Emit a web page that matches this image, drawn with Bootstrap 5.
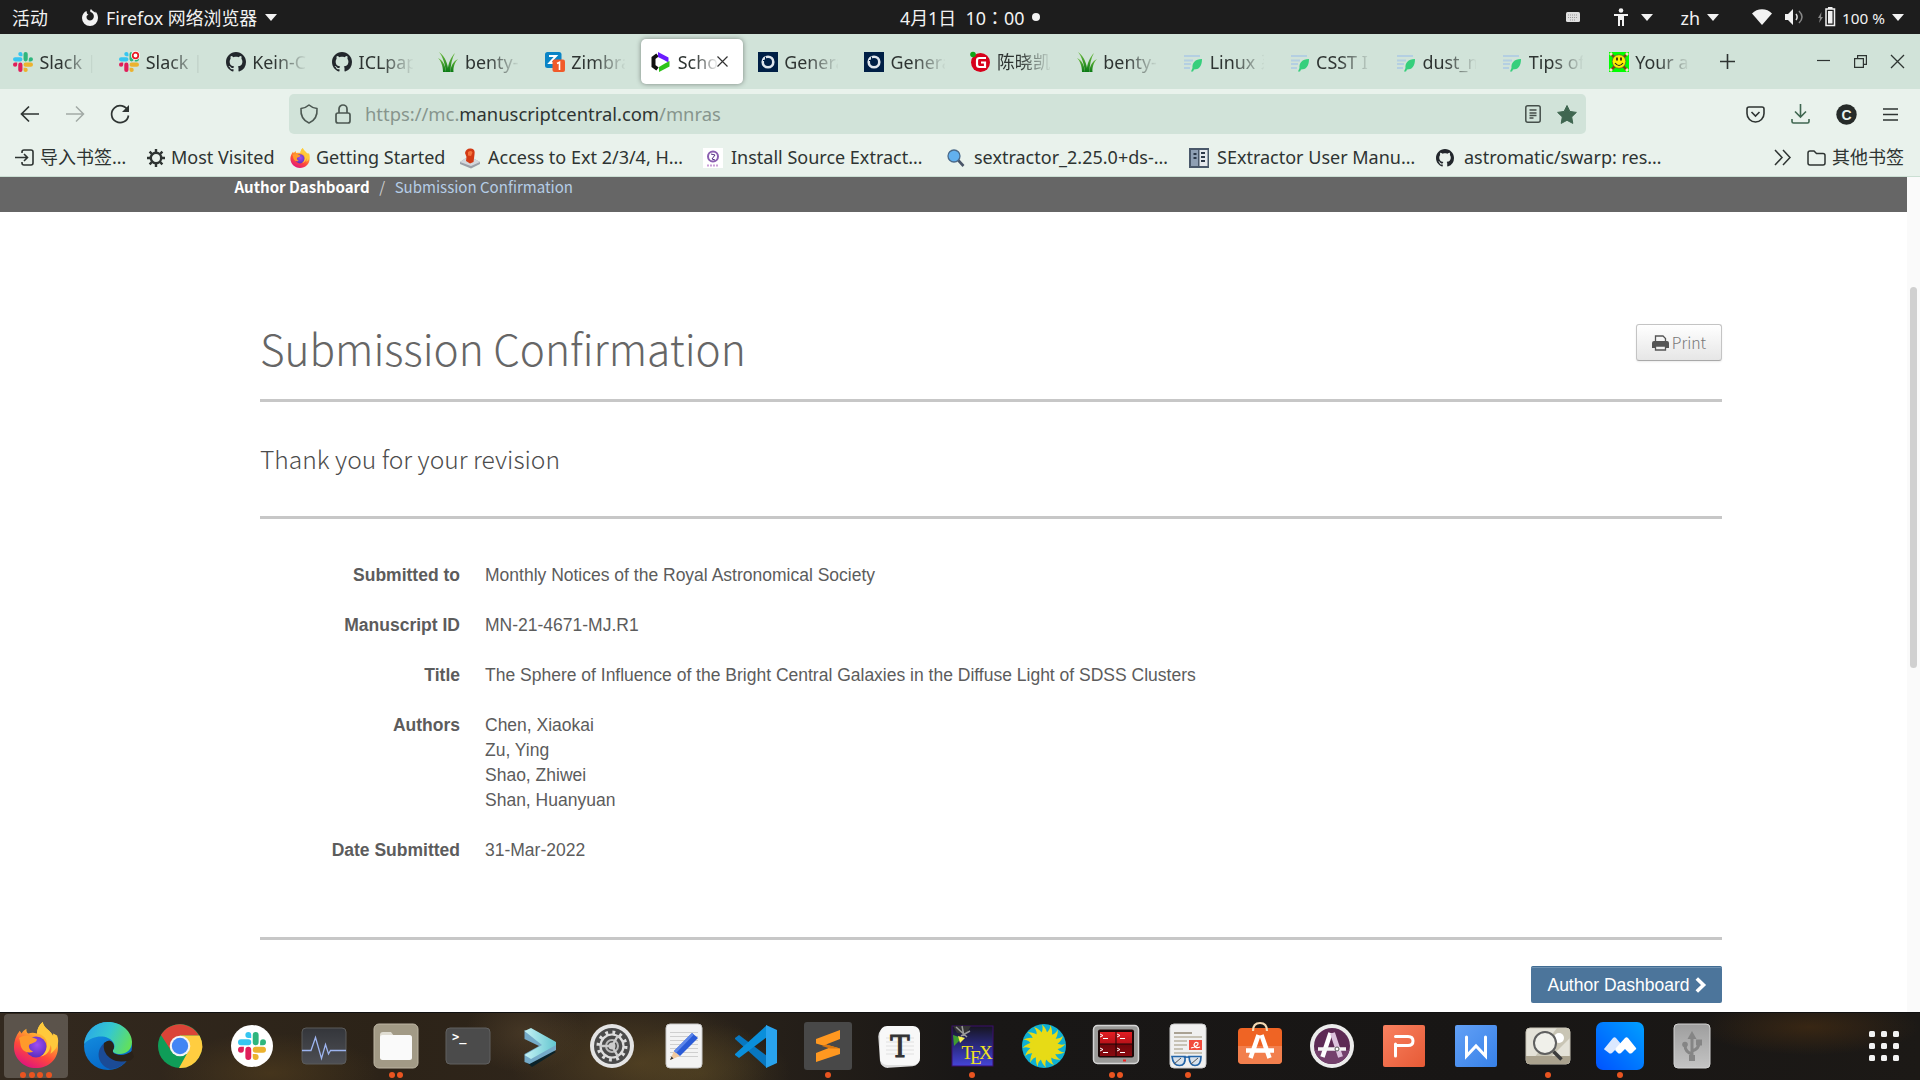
<!DOCTYPE html>
<html lang="zh-CN">
<head>
<meta charset="utf-8">
<title>Submission Confirmation</title>
<link href="https://cdn.jsdelivr.net/npm/bootstrap@5.3.0/dist/css/bootstrap.min.css" rel="stylesheet">
<style>
  body { width:1920px; height:1080px; overflow:hidden; font-family:"Noto Sans","Noto Sans CJK SC",sans-serif; font-size:17.9px; color:#2e3432; background:#fff; }
  svg { display:block; flex:none; overflow:visible; }
  .defs { width:0; height:0; }
  .nowrap { white-space:nowrap; }
  /* desktop panel */
  .panel { height:34px; background:#1d1d1d; color:#f2f2f2; line-height:34px; }
  .panel span { padding-top:1px; }
  .panel-side { width:880px; }
  .panel .tri { width:0; height:0; padding:0; border:6px solid transparent; border-top:7px solid #f2f2f2; border-bottom:0; flex:none; }
  .act { margin-left:12px; width:70px; }
  .panel .clock-dot { width:8px; height:8px; padding:0; border-radius:50%; background:#f2f2f2; }
  .clock em { font-style:normal; font-family:"Noto Sans CJK JP",sans-serif; }
  .batt { font-size:15.3px; margin-right:3px; }
  .sp-kb{margin-right:33px}.sp-acc{margin-right:12px}.sp-t1{margin-right:28px}.sp-zh{margin-right:7px}.sp-t2{margin-right:33px}.sp-wf{margin-right:13px}.sp-vol{margin-right:14px}.sp-bat{margin-right:6px}
  /* tabs */
  .tabstrip { height:55px; background:#d1e3d9; padding-left:2.4px; }
  .btab { width:106.4px; height:45px; padding:0 0 0 10.5px; gap:6.5px; flex:none; }
  .btab .ttl { width:54px; padding-top:1px; overflow:hidden; -webkit-mask-image:linear-gradient(90deg,#000 42%,transparent 102%); mask-image:linear-gradient(90deg,#000 42%,transparent 102%); }
  .btab.live { width:102px; margin:0 4.4px 0 0; background:#fff; border-radius:5px; box-shadow:0 0 5px rgba(0,0,0,.42); }
  .btab.live .ttl { width:40px; }
  .btab.live .ttl + svg { margin-left:-7px; }
  .plus { margin-left:15px; }
  .winbtns { gap:24px; padding-right:16px; }
  /* navigation */
  .navrow { height:51px; background:#e9f2ec; padding-bottom:1px; }
  .navleft { width:289px; padding-left:20px; gap:25px; }
  .address { width:1297px; height:40px; border-radius:5px; background:#d1e3d9; padding:0 9px 0 10px; font-size:18.4px; color:#87958d; }
  .address b { font-weight:400; color:#2e3432; }
  .address .url { margin-left:14px; padding-bottom:1px; }
  .navright { gap:26px; padding-right:22px; }
  /* bookmarks */
  .marks { height:37px; background:#e9f2ec; border-bottom:1px solid #cbdfd3; padding-left:15px; padding-bottom:1px; font-size:18px; }
  .bm { gap:6px; flex:none; }
  .w1{width:132px}.w2{width:143px}.w3{width:170px}.w4{width:243px}
  .bm.w4 { gap:8px; }
  /* page */
  .viewport { height:835px; }
  .page { width:1907px; background:#fff; }
  .sbar { width:13px; background:#fafafa; padding:110px 3px 0 3px; }
  .thumb { width:7px; height:381px; border-radius:4px; background:#d0d0d0; }
  .source { font-family:"Noto Sans CJK SC",sans-serif; }
  .crumbs { height:35px; background:#666; padding-left:234.5px; padding-top:1px; font-size:15.05px; line-height:18px; color:#b5cde6; }
  .crumbs b { color:#fff; }
  .crumbs i { font-style:normal; color:#ccc; width:25px; text-align:center; }
  .sheet { width:1462px; margin-left:260px; padding-top:112px; color:#5c5c5c; }
  .rule { height:3px; background:#c7c7c7; }
  .head-row { height:75px; }
  .head-row h1 { font-size:42.4px; font-weight:300; line-height:48px; margin:0; color:#666; }
  .thanks { height:114px; font-size:24.6px; font-weight:300; line-height:112px; color:#4c4c4c; }
  .btn-print { width:86px; height:37px; border:1px solid #c4c4c4; border-bottom-color:#a9a9a9; border-radius:3px; background:linear-gradient(#fff,#e6e6e6); box-shadow:0 1px 2px rgba(0,0,0,.08); font-size:15.8px; font-weight:300; color:#777; padding:0; gap:3px; line-height:33px; }
  .facts { font-family:"Liberation Sans",Arial,sans-serif; font-size:17.5px; line-height:25px; padding-top:43.5px; height:418px; }
  .facts dl { margin:0 0 25px; gap:25px; }
  .facts dt { width:200px; text-align:right; }
  .facts dd { margin:0; }
  .btn-dash { width:191px; height:37px; margin-top:26px; border-radius:2px; background:#4c759b; color:#fff; font:17.5px "Liberation Sans",Arial,sans-serif; padding:0; border:0; border-top:1px solid #406c93; gap:5px; box-shadow:inset 0 1px 0 #6f92b2; }
  /* dock */
  .dock { height:68px; border-top:1px solid #111; background:
    radial-gradient(ellipse 110px 40px at 270px 60px,rgba(88,66,30,.55),transparent),
    radial-gradient(ellipse 130px 60px at 640px 50px,rgba(96,76,38,.6),transparent),
    radial-gradient(ellipse 60px 40px at 525px 20px,rgba(96,76,50,.45),transparent),
    radial-gradient(ellipse 90px 50px at 700px 60px,rgba(90,74,36,.5),transparent),
    radial-gradient(ellipse 110px 28px at 1810px 14px,rgba(80,50,18,.55),transparent),
    linear-gradient(90deg,#33291f 0,#2c2318 380px,#30261b 600px,#221d18 830px,#191716 960px,#181615 1500px,#1c1916 1920px); }
  .dockitem { width:72px; height:67px; padding-top:9px; flex:none; }
  .dockitem .face { width:48px; height:48px; }
  .dockitem.on .tile { width:64px; height:64px; border-radius:4px; background:rgba(255,255,255,.2); margin-top:-8px; padding-top:8px; }
  .dots { gap:2.7px; height:6px; margin-top:2px; }
  .dots i { width:6px; height:6px; border-radius:50%; background:#e95420; }
  .grid9 { margin-right:21px; margin-top:18px; width:30px; height:30px; }
</style>
<script src="https://cdn.jsdelivr.net/npm/bootstrap@5.3.0/dist/js/bootstrap.bundle.min.js"></script>
</head>
<body>
<svg class="defs position-absolute">
  <defs>
    <linearGradient id="gFox" x1=".8" y1="0" x2=".3" y2="1"><stop offset="0" stop-color="#fff44f"/><stop offset=".35" stop-color="#ffa930"/><stop offset=".65" stop-color="#ff4a3a"/><stop offset="1" stop-color="#e0127f"/></linearGradient>
    <radialGradient id="gOrb" cx=".55" cy=".4" r=".6"><stop offset="0" stop-color="#a04df0"/><stop offset="1" stop-color="#5a2fbf"/></radialGradient>
    <linearGradient id="gEdgeT" x1="0" y1=".3" x2="1" y2=".6"><stop offset="0" stop-color="#2aa7e8"/><stop offset=".5" stop-color="#35c8cf"/><stop offset="1" stop-color="#63e05a"/></linearGradient>
    <linearGradient id="gEdgeB" x1="0" y1="0" x2=".4" y2="1"><stop offset="0" stop-color="#1798e6"/><stop offset="1" stop-color="#0668c8"/></linearGradient>
    <linearGradient id="gGrey" x1="0" y1="0" x2="0" y2="1"><stop offset="0" stop-color="#34363b"/><stop offset="1" stop-color="#4d4e53"/></linearGradient>
    <linearGradient id="gMeet" x1="1" y1="0" x2="0" y2="1"><stop offset="0" stop-color="#00a0ff"/><stop offset="1" stop-color="#0052ff"/></linearGradient>
    <linearGradient id="gCyan" x1="0" y1="0" x2="1" y2="0"><stop offset="0" stop-color="#c5f2f5"/><stop offset="1" stop-color="#63c6cf"/></linearGradient>
    <linearGradient id="gRed" x1="0" y1="0" x2="0" y2="1"><stop offset="0" stop-color="#e21d22"/><stop offset=".49" stop-color="#b81219"/><stop offset=".5" stop-color="#6e060a"/><stop offset="1" stop-color="#8a0a10"/></linearGradient>
    <linearGradient id="gP" x1="0" y1="0" x2="1" y2="1"><stop offset="0" stop-color="#f98160"/><stop offset="1" stop-color="#e65a36"/></linearGradient>
    <linearGradient id="gW" x1="0" y1="0" x2="1" y2="1"><stop offset="0" stop-color="#62a0f6"/><stop offset="1" stop-color="#3781e8"/></linearGradient>
    <linearGradient id="gUsb" x1="0" y1="0" x2="0" y2="1"><stop offset="0" stop-color="#9e9e9e"/><stop offset="1" stop-color="#c4c4c4"/></linearGradient>
    <linearGradient id="gTex" x1="0" y1="0" x2="0" y2="1"><stop offset="0" stop-color="#17151f"/><stop offset=".5" stop-color="#2a2a80"/><stop offset="1" stop-color="#4545d8"/></linearGradient>
    <linearGradient id="gGrass" x1="0" y1="0" x2="0" y2="1"><stop offset="0" stop-color="#6dbb3f"/><stop offset="1" stop-color="#0a7a14"/></linearGradient>
  </defs>
  <symbol id="slack" viewBox="0 0 24 24">
    <path fill="#e01e5a" d="M5.042 15.165a2.528 2.528 0 0 1-2.52 2.523A2.528 2.528 0 0 1 0 15.165a2.527 2.527 0 0 1 2.522-2.52h2.52v2.52zM6.313 15.165a2.527 2.527 0 0 1 2.521-2.52 2.527 2.527 0 0 1 2.521 2.52v6.313A2.528 2.528 0 0 1 8.834 24a2.528 2.528 0 0 1-2.521-2.522v-6.313z"/>
    <path fill="#36c5f0" d="M8.834 5.042a2.528 2.528 0 0 1-2.521-2.52A2.528 2.528 0 0 1 8.834 0a2.528 2.528 0 0 1 2.521 2.522v2.52H8.834zM8.834 6.313a2.528 2.528 0 0 1 2.521 2.521 2.528 2.528 0 0 1-2.521 2.521H2.522A2.528 2.528 0 0 1 0 8.834a2.528 2.528 0 0 1 2.522-2.521h6.312z"/>
    <path fill="#2eb67d" d="M18.956 8.834a2.528 2.528 0 0 1 2.522-2.521A2.528 2.528 0 0 1 24 8.834a2.528 2.528 0 0 1-2.522 2.521h-2.522V8.834zM17.688 8.834a2.528 2.528 0 0 1-2.523 2.521 2.527 2.527 0 0 1-2.52-2.521V2.522A2.527 2.527 0 0 1 15.165 0a2.528 2.528 0 0 1 2.523 2.522v6.312z"/>
    <path fill="#ecb22e" d="M15.165 18.956a2.528 2.528 0 0 1 2.523 2.522A2.528 2.528 0 0 1 15.165 24a2.527 2.527 0 0 1-2.52-2.522v-2.522h2.52zM15.165 17.688a2.527 2.527 0 0 1-2.52-2.523 2.526 2.526 0 0 1 2.52-2.52h6.313A2.527 2.527 0 0 1 24 15.165a2.528 2.528 0 0 1-2.522 2.523h-6.313z"/>
  </symbol>
  <symbol id="github" viewBox="0 0 16 16"><path fill="#22272c" d="M8 0C3.58 0 0 3.58 0 8c0 3.54 2.29 6.53 5.47 7.59.4.07.55-.17.55-.38 0-.19-.01-.82-.01-1.49-2.01.37-2.53-.49-2.69-.94-.09-.23-.48-.94-.82-1.13-.28-.15-.68-.52-.01-.53.63-.01 1.08.58 1.23.82.72 1.21 1.87.87 2.33.66.07-.52.28-.87.51-1.07-1.78-.2-3.64-.89-3.64-3.95 0-.87.31-1.59.82-2.15-.08-.2-.36-1.02.08-2.12 0 0 .67-.21 2.2.82.64-.18 1.32-.27 2-.27s1.36.09 2 .27c1.53-1.04 2.2-.82 2.2-.82.44 1.1.16 1.92.08 2.12.51.56.82 1.27.82 2.15 0 3.07-1.87 3.75-3.65 3.95.29.25.54.73.54 1.48 0 1.07-.01 1.93-.01 2.2 0 .21.15.46.55.38A8.01 8.01 0 0 0 16 8c0-4.42-3.58-8-8-8z"/></symbol>
  <symbol id="grass" viewBox="0 0 20 20"><g fill="url(#gGrass)"><path d="M8 20C7 12 5 5 1 0c6 4 9 12 9.500 20z"/><path d="M5 20C5 14 3 9 0 6c5 2 7.500 8 8 14z"/><path d="M9.500 20C10 11 13 5 17 1c-3 5-4.500 12-4.500 19z"/><path d="M12.500 20c0-6 3-11 7.500-13-3 3-5 8-4.500 13z"/></g></symbol>
  <symbol id="feather" viewBox="0 0 20 20"><path d="M1 4h16M1 8.500h9M1 12h7M1 16h6" stroke="#b4cfe2" stroke-width="2"/><path fill="#36cf7c" d="M19 7c-7 0-10 4-9.500 9L8 19.500h2l1-2c5 0 8-3 8-10.500z"/></symbol>
  <symbol id="ring" viewBox="0 0 20 20"><path fill="#001f46" d="M0 0h20v20H0z"/><circle cx="10" cy="10" r="5.300" fill="none" stroke="#dfe5ec" stroke-width="2.600"/><path d="M7.500 4.700v2.800M5 8.500h2" stroke="#001f46"/></symbol>
  <symbol id="firefox" viewBox="0 0 48 48">
    <path fill="url(#gFox)" d="M31 0c-4 3-6 8-6 12-3-1-6-1-9 0-2-1-2-3-2-5-2 1-4 3-5 5L7 9C3 14 1 20 1 26c0 12 10 22 23 22s23-9 23-22c0-5-2-10-5-14v3C40 9 32 7 31 0z"/>
    <circle cx="24" cy="26" r="11" fill="url(#gOrb)"/>
    <path fill="#ff9a2b" d="M6 17c4-3 9-4 14-1l5 2c0 3-4 4-7 5-3 2-1 6 3 8-5 2-10 0-12-4-2-3-1-8-3-10z"/>
    <path fill="#ffc93c" d="M31 0c-4 3-6 8-6 12 8 1 12 8 10 15-1 4-3 7-6 9 6-1 10-6 10-12 2 3 1 6 0 9 7-4 10-12 7-19l-4-2v3C40 9 32 7 31 0z"/>
  </symbol>
</svg>

<div class="vh-100 d-flex flex-column">
  <!-- desktop panel -->
  <header class="panel d-flex justify-content-between align-items-center nowrap">
    <div class="panel-side d-flex align-items-center">
      <span class="act">活动</span>
      <svg width="16" height="17" viewBox="0 0 16 17"><path fill="#f2f2f2" d="M9 0c-1 1-1 2-.5 3C12 4 13 8 10.500 10.500 8 12.500 4.500 11 4.500 8c0-1.500 1-2 2-2L5 4.500 4.500 2C2 3 0 6 0 9a8 8 0 0 0 16 0c0-3-1-5-2.500-6.500V4C12.500 2.500 10 2 9 0z"/></svg>
      <span class="ms-1 ps-1 pe-2">Firefox 网络浏览器</span><span class="tri"></span>
    </div>
    <div class="d-flex align-items-center flex-fill">
      <span class="clock ms-3 ps-1">4月1日&nbsp; 10<em lang="ja">：</em>00</span><span class="clock-dot ms-2"></span>
    </div>
    <div class="d-flex align-items-center pe-3">
      <svg width="14" height="10" viewBox="0 0 14 10" class="sp-kb"><rect width="14" height="10" rx="1.500" fill="#e0e0e0"/><path d="M2 3h10M2 5.500h10M4 8h6" stroke="#999" stroke-dasharray="1 1"/></svg>
      <svg width="16" height="18" viewBox="0 0 16 18" class="sp-acc"><circle cx="8" cy="2.500" r="2.300" fill="#f2f2f2"/><path d="M1 7h14M8 6v5M6 7v11M10 7v11" stroke="#f2f2f2" stroke-width="2"/><path fill="#f2f2f2" d="M5 6h6v6H5z"/></svg>
      <span class="tri sp-t1"></span><span class="sp-zh">zh</span><span class="tri sp-t2"></span>
      <svg width="20" height="16" viewBox="0 0 20 16" class="sp-wf"><path fill="#f2f2f2" d="M0 4.500C5-1.300 15-1.300 20 4.500L10 16z"/></svg>
      <svg width="19" height="16" viewBox="0 0 19 16" class="sp-vol"><path fill="#f2f2f2" d="M0 5h3l5-5v16l-5-5H0z"/><path d="M11 5c1.500 2 1.500 4 0 6" stroke="#ddd" stroke-width="1.500" fill="none"/><path d="M14 2c4 4 4 8 0 12" stroke="#888" stroke-width="1.500" fill="none"/></svg>
      <svg width="18" height="20" viewBox="0 0 18 20" class="sp-bat"><path fill="#888" d="M3.500 5L0 11h2l-1 5 4-6H3z"/><path d="M8 2h8.500v16.500H8z" fill="none" stroke="#f2f2f2" stroke-width="1.500"/><path fill="#f2f2f2" d="M10 0h4.500v2H10zM10 4h4.500v12.500H10z"/></svg>
      <span class="batt">100 %</span><span class="tri ms-1"></span>
    </div>
  </header>

  <!-- tab strip -->
  <div class="tabstrip d-flex align-items-center nowrap">
    <div class="btab d-flex align-items-center"><svg width="20" height="20"><use href="#slack"/></svg><span class="ttl">Slack |</span></div>
    <div class="btab d-flex align-items-center"><svg width="20" height="20"><use href="#slack"/><circle cx="16.500" cy="3.500" r="4.500" fill="#fff"/><circle cx="16.500" cy="3.500" r="2.800" fill="#fff" stroke="#e81c24" stroke-width="1.800"/></svg><span class="ttl">Slack |</span></div>
    <div class="btab d-flex align-items-center"><svg width="20" height="20"><use href="#github"/></svg><span class="ttl">Kein-C</span></div>
    <div class="btab d-flex align-items-center"><svg width="20" height="20"><use href="#github"/></svg><span class="ttl">ICLpap</span></div>
    <div class="btab d-flex align-items-center"><svg width="20" height="20"><use href="#grass"/></svg><span class="ttl">benty-</span></div>
    <div class="btab d-flex align-items-center"><svg width="20" height="20" viewBox="0 0 20 20"><rect width="16.500" height="16" rx="2.500" fill="#0a84c6"/><path d="M4 4h7L4.500 11H9" stroke="#fff" stroke-width="2" fill="none"/><rect x="7.500" y="7.500" width="12.500" height="12.500" rx="2" fill="#f15a29"/><path d="M12 11.500l2.500-1.300V18" stroke="#fff" stroke-width="1.600" fill="none"/></svg><span class="ttl">Zimbra</span></div>
    <div class="btab live d-flex align-items-center"><svg width="20" height="20" viewBox="0 0 20 20"><path d="M6.500 3L2.500 6v8l4 3" stroke="#111" stroke-width="4" fill="none"/><path fill="#6a1bff" d="M7 0l10.500 5.500v5L13 8 7 5z"/><path fill="#2fc31a" d="M18.500 9v5.500L8 20v-5l5-3z"/></svg><span class="ttl">Scho</span><svg width="11" height="11" viewBox="0 0 11 11"><path d="M.5.5l10 10M10.500.5l-10 10" stroke="#333" stroke-width="1.200"/></svg></div>
    <div class="btab d-flex align-items-center"><svg width="20" height="20"><use href="#ring"/></svg><span class="ttl">Genera</span></div>
    <div class="btab d-flex align-items-center"><svg width="20" height="20"><use href="#ring"/></svg><span class="ttl">Genera</span></div>
    <div class="btab d-flex align-items-center"><svg width="20" height="20" viewBox="0 0 20 20"><circle cx="10.500" cy="10.500" r="9.500" fill="#d7001b"/><path d="M16 6H9.500Q7 6 7 8.500v4Q7 15 9.500 15H15v-4.500H11" stroke="#fff" stroke-width="2.200" fill="none"/><circle cx="3" cy="2.500" r="2.800" fill="#0fa516"/></svg><span class="ttl">陈晓凯</span></div>
    <div class="btab d-flex align-items-center"><svg width="20" height="20"><use href="#grass"/></svg><span class="ttl">benty-</span></div>
    <div class="btab d-flex align-items-center"><svg width="20" height="20"><use href="#feather"/></svg><span class="ttl">Linux 系</span></div>
    <div class="btab d-flex align-items-center"><svg width="20" height="20"><use href="#feather"/></svg><span class="ttl">CSST I</span></div>
    <div class="btab d-flex align-items-center"><svg width="20" height="20"><use href="#feather"/></svg><span class="ttl">dust_m</span></div>
    <div class="btab d-flex align-items-center"><svg width="20" height="20"><use href="#feather"/></svg><span class="ttl">Tips of</span></div>
    <div class="btab d-flex align-items-center"><svg width="20" height="20" viewBox="0 0 20 20"><path fill="#0f0" d="M0 0h20v20H0z"/><path d="M2 2l16 16M18 2L2 18" stroke="#7a4a10" stroke-width="2.500"/><path d="M1 3l2-2M17 1l2 2M1 17l2 2M17 19l2-2" stroke="#f4e6c8" stroke-width="2.500"/><circle cx="10" cy="9.500" r="6.800" fill="#ffee00" stroke="#664" stroke-width=".8"/><path d="M6 11q4 5 8 0" fill="none" stroke="#222" stroke-width="1.200"/><path d="M8 5.500v3M12 5.500v3" stroke="#111" stroke-width="1.600"/></svg><span class="ttl">Your a</span></div>
    <svg class="plus" width="15" height="15" viewBox="0 0 15 15"><path d="M7.500 0v15M0 7.500h15" stroke="#2e3432" stroke-width="1.600"/></svg>
    <div class="winbtns ms-auto d-flex align-items-center">
      <svg width="13" height="13" viewBox="0 0 13 13"><path d="M0 5.500h13" stroke="#2e3432" stroke-width="1.200"/></svg>
      <svg width="13" height="13" viewBox="0 0 13 13"><path d="M.6 3.600h8.800v8.800H.6zM3.600 3.600v-3h8.800v8.800h-3" fill="none" stroke="#2e3432" stroke-width="1.200"/></svg>
      <svg width="13" height="13" viewBox="0 0 13 13"><path d="M0 0l13 13M13 0L0 13" stroke="#2e3432" stroke-width="1.300"/></svg>
    </div>
  </div>

  <!-- navigation row -->
  <nav class="navrow d-flex align-items-center nowrap">
    <div class="navleft d-flex align-items-center">
      <svg width="20" height="18" viewBox="0 0 20 18"><path d="M19 9H2M9 1.500L1.500 9 9 16.500" fill="none" stroke="#2e3432" stroke-width="1.700"/></svg>
      <svg width="20" height="18" viewBox="0 0 20 18"><path d="M1 9h17M11 1.500L18.500 9 11 16.500" fill="none" stroke="#a2aaa5" stroke-width="1.500"/></svg>
      <svg width="20" height="20" viewBox="0 0 20 20"><path d="M18 7A8.500 8.500 0 1 0 18.500 11.500" fill="none" stroke="#2e3432" stroke-width="1.700"/><path fill="#2e3432" d="M19 1v7h-7z"/></svg>
    </div>
    <div class="address d-flex align-items-center">
      <svg width="20" height="20" viewBox="0 0 20 20" class="me-3"><path d="M10 1Q13 3.800 18 4.500C18.500 11 16 16.500 10 19 4 16.500 1.500 11 2 4.500Q7 3.800 10 1z" fill="none" stroke="#4c5852" stroke-width="1.600" stroke-linejoin="round"/></svg>
      <svg width="16" height="20" viewBox="0 0 16 20"><rect x="1" y="9" width="14" height="10" rx="2" fill="none" stroke="#4c5852" stroke-width="1.700"/><path d="M4 9V5a4 4 0 0 1 8 0v4" fill="none" stroke="#4c5852" stroke-width="1.700"/></svg>
      <span class="url">https://mc.<b>manuscriptcentral.com</b>/mnras</span>
      <svg class="ms-auto me-3" width="16" height="18" viewBox="0 0 16 18"><rect x=".8" y=".8" width="14.400" height="16.400" rx="2" fill="none" stroke="#454f4a" stroke-width="1.500"/><path d="M4.500 5h7M4.500 8h7M4.500 10.500h7M4.500 13h4" stroke="#454f4a" stroke-width="1.300"/></svg>
      <svg width="20" height="19" viewBox="0 0 20 19"><path fill="#3f6650" stroke="#3f6650" stroke-linejoin="round" d="M10 .5l2.900 5.900 6.500 1-4.700 4.500 1.100 6.500L10 15.300l-5.800 3.100 1.100-6.500L.6 7.400l6.500-1z"/></svg>
    </div>
    <div class="navright ms-auto d-flex align-items-center">
      <svg width="19" height="17" viewBox="0 0 19 17"><path d="M3 1h13a2 2 0 0 1 2 2v4.500a8.500 8.500 0 0 1-17 0V3a2 2 0 0 1 2-2z" fill="none" stroke="#2e3432" stroke-width="1.600"/><path d="M5.500 6l4 4 4-4" fill="none" stroke="#2e3432" stroke-width="1.600"/></svg>
      <svg width="19" height="20" viewBox="0 0 19 20"><path d="M9.500 0v13M4 7.500L9.500 13 15 7.500M1 15v2.500Q1 19 2.500 19h14q1.500 0 1.500-1.500V15" fill="none" stroke="#3f6650" stroke-width="1.600"/></svg>
      <svg width="21" height="21" viewBox="0 0 21 21"><circle cx="10.500" cy="10.500" r="10.200" fill="#262b29"/><text x="10.500" y="15.500" text-anchor="middle" font-family="Liberation Sans,sans-serif" font-weight="700" font-size="14" fill="#e9f2ec">C</text></svg>
      <svg width="15" height="13" viewBox="0 0 15 13"><path d="M0 1h15M0 6.500h15M0 12h15" stroke="#2e3432" stroke-width="1.500"/></svg>
    </div>
  </nav>

  <!-- bookmarks -->
  <div class="marks d-flex align-items-center nowrap">
    <div class="bm w1 d-flex align-items-center"><svg width="19" height="17" viewBox="0 0 19 17"><path d="M7 4V3q0-2 2-2h7q2 0 2 2v11q0 2-2 2H9q-2 0-2-2v-1M0 8.500h12M9 5l3.500 3.500L9 12" fill="none" stroke="#2e3432" stroke-width="1.600"/></svg><span>导入书签…</span></div>
    <div class="bm w2 d-flex align-items-center"><svg width="18" height="18" viewBox="0 0 18 18"><circle cx="9" cy="9" r="5.200" fill="none" stroke="#2e3432" stroke-width="2.400"/><path d="M9 0v3M9 15v3M0 9h3M15 9h3M2.600 2.600l2.200 2.200M13.200 13.200l2.200 2.200M15.400 2.600l-2.200 2.200M4.800 13.200l-2.200 2.200" stroke="#2e3432" stroke-width="2.400"/></svg><span>Most Visited</span></div>
    <div class="bm w3 d-flex align-items-center"><svg width="20" height="20"><use href="#firefox"/></svg><span>Getting Started</span></div>
    <div class="bm w4 d-flex align-items-center"><svg width="20" height="20" viewBox="0 0 20 20"><path fill="#9aa0a8" d="M0 14l9-6 11 6v2l-9 4.500L0 16z"/><path fill="#d3d7dc" d="M0 14l9-6 11 6-9 4z"/><path fill="#d33a14" d="M5 5q1-5 6-4.500 4.500.5 3.500 6L13.500 14l-3.500 1.500L6 13l.5-4z"/><path fill="#f2733c" d="M8 4q3-2 4.500.5L11 8 8 7.500z"/></svg><span>Access to Ext 2/3/4, H…</span></div>
    <div class="bm w4 d-flex align-items-center"><svg width="20" height="20" viewBox="0 0 20 20"><path fill="#fff" d="M0 0h20v20H0z"/><circle cx="10" cy="8.500" r="5" fill="none" stroke="#8a5fb0" stroke-width="2"/><path d="M8 6l4 1-3 4 3 1" fill="none" stroke="#503080"/><path d="M4 17.500h12" stroke="#c9a0d8" stroke-width="2" stroke-dasharray="2 1"/></svg><span>Install Source Extract…</span></div>
    <div class="bm w4 d-flex align-items-center"><svg width="20" height="20" viewBox="0 0 20 20"><path d="M12 12l5.500 6" stroke="#4a5568" stroke-width="2.600"/><circle cx="8" cy="8" r="6" fill="#62b0ee" stroke="#4a6a8a" stroke-width="1.300"/></svg><span>sextractor_2.25.0+ds-…</span></div>
    <div class="bm w4 d-flex align-items-center"><svg width="20" height="20" viewBox="0 0 20 20"><path fill="#49586a" d="M0 0h20v20H0z"/><path fill="#8fa0b4" d="M2 2h7v16H2z"/><path fill="#e4e8ec" d="M10.500 2h8v16h-8z"/><path d="M4.500 6h3M4.500 10h3M12 5h4M12 9h4M12 13h4" stroke="#2c3848" stroke-width="2"/></svg><span>SExtractor User Manu…</span></div>
    <div class="bm d-flex align-items-center ps-1"><svg width="18" height="18"><use href="#github"/></svg><span class="ps-1">astromatic/swarp: res…</span></div>
    <svg class="ms-auto" width="17" height="15" viewBox="0 0 17 15"><path d="M1 0l7 7.500L1 15M9 0l7 7.500L9 15" fill="none" stroke="#2e3432" stroke-width="1.500"/></svg>
    <div class="bm d-flex align-items-center ms-3 pe-3"><svg width="19" height="16" viewBox="0 0 19 16"><path d="M1 13V3q0-2 2-2h4l2.500 2.500H16q2 0 2 2V13q0 2-2 2H3q-2 0-2-2z" fill="none" stroke="#2e3432" stroke-width="1.500"/></svg><span>其他书签</span></div>
  </div>

  <!-- web page -->
  <div class="viewport d-flex overflow-hidden">
    <main class="page">
      <div class="crumbs source d-flex align-items-start"><b>Author Dashboard</b><i>/</i><span>Submission Confirmation</span></div>
      <div class="sheet">
        <div class="head-row d-flex justify-content-between align-items-start">
          <h1 class="source nowrap">Submission Confirmation</h1>
          <button class="btn btn-print source d-flex align-items-center justify-content-center" type="button"><svg width="17" height="16" viewBox="0 0 17 16"><path fill="#555" d="M0 8q0-2 2-2h13q2 0 2 2v5h-3v-2H3v2H0z"/><path d="M3.500 7V1H11l2.500 2.500V7M3.500 11v4h10v-4z" fill="none" stroke="#555" stroke-width="1.300"/></svg><span>Print</span></button>
        </div>
        <div class="rule"></div>
        <div class="thanks source">Thank you for your revision</div>
        <div class="rule"></div>
        <div class="facts">
          <dl class="d-flex"><dt>Submitted to</dt><dd>Monthly Notices of the Royal Astronomical Society</dd></dl>
          <dl class="d-flex"><dt>Manuscript ID</dt><dd>MN-21-4671-MJ.R1</dd></dl>
          <dl class="d-flex"><dt>Title</dt><dd>The Sphere of Influence of the Bright Central Galaxies in the Diffuse Light of SDSS Clusters</dd></dl>
          <dl class="d-flex"><dt>Authors</dt><dd>Chen, Xiaokai<br>Zu, Ying<br>Shao, Zhiwei<br>Shan, Huanyuan</dd></dl>
          <dl class="d-flex"><dt>Date Submitted</dt><dd>31-Mar-2022</dd></dl>
        </div>
        <div class="rule"></div>
        <button class="btn btn-dash d-flex align-items-center justify-content-center ms-auto" type="button"><span>Author Dashboard</span><svg width="11" height="16" viewBox="0 0 11 16"><path d="M1.800 1.500L8.500 8l-6.700 6.500" fill="none" stroke="#fff" stroke-width="3.600"/></svg></button>
      </div>
    </main>
    <div class="sbar"><div class="thumb"></div></div>
  </div>

  <!-- dock -->
  <footer class="dock d-flex">
    <div class="dockitem on d-flex flex-column align-items-center"><div class="tile d-flex flex-column align-items-center"><svg class="face" viewBox="0 0 48 48"><use href="#firefox" x="1" y="0" width="46" height="46"/></svg><div class="dots d-flex"><i></i><i></i><i></i><i></i></div></div></div>
    <div class="dockitem d-flex flex-column align-items-center"><svg class="face" viewBox="0 0 48 48"><circle cx="24" cy="24" r="24" fill="url(#gEdgeB)"/><path fill="url(#gEdgeT)" d="M0 22C2 8 12 0 24 0c14 0 24 10 24 20 0 8-6 12-12 12-5 0-8-2-7-4 2-2 2-5 0-8C24 13 10 12 0 22z"/><path fill="#1b4b96" d="M15 29c2-6 6-10 11-10 4 2 5 6 3 9-2 5 3 9 9 9l6-1c-4 8-12 11-18 11-8-2-13-10-11-18z"/><path fill="#2b2219" d="M20 21q6-5 9 0 2 4 0 7-1 3 3 4 7 3 16-3l2 6-3 3q-13 4-21-2-8-6-6-15z"/></svg></div>
    <div class="dockitem d-flex flex-column align-items-center"><svg class="face" viewBox="0 0 48 48"><circle cx="24" cy="24" r="22" fill="#0f9d58"/><path fill="#db4437" d="M5 13A22 22 0 0 1 43 13.500H24L14 27z"/><path fill="#ffcd40" d="M24 13.500h19.500A22 22 0 0 1 23 46l10-18z"/><circle cx="24" cy="24" r="10.300" fill="#f4f4f4"/><circle cx="24" cy="24" r="8.200" fill="#4285f4"/></svg></div>
    <div class="dockitem d-flex flex-column align-items-center"><svg class="face" viewBox="0 0 48 48"><circle cx="24" cy="24" r="21" fill="#fff"/><use href="#slack" x="10" y="10" width="28" height="28"/></svg></div>
    <div class="dockitem d-flex flex-column align-items-center"><svg class="face" viewBox="0 0 48 48"><rect x="2" y="6" width="44" height="36" rx="4" fill="url(#gGrey)" stroke="#5b5b5b"/><path d="M2 28.500h9l4.500-13 6 21 4-14 3 9.500 2-3.500H46" fill="none" stroke="#9db4ef" stroke-width="1.300"/></svg></div>
    <div class="dockitem d-flex flex-column align-items-center"><svg class="face" viewBox="0 0 48 48"><rect x="2" y="2" width="44" height="44" rx="5" fill="#a29a86" stroke="#bdb5a3"/><path fill="#e0ddd3" d="M8 13q0-3 3-3h8l3 4v5H8z"/><rect x="8" y="13" width="32" height="25" rx="2.500" fill="#fafafa"/></svg><div class="dots d-flex"><i></i><i></i></div></div>
    <div class="dockitem d-flex flex-column align-items-center"><svg class="face" viewBox="0 0 48 48"><rect x="2" y="6" width="44" height="36" rx="4" fill="#4b4b4b" stroke="#616161"/><text x="8" y="19" font-family="DejaVu Sans Mono,monospace" font-weight="700" font-size="12" fill="#fff">&gt;_</text></svg></div>
    <div class="dockitem d-flex flex-column align-items-center"><svg class="face" viewBox="0 0 48 48"><path fill="#0b2229" d="M10 40l26-12 4 2-24 15z"/><path fill="#74aac8" d="M8.500 8v9L23 24l-14.500 8v8l5 2L40 28v-7z"/><path fill="url(#gCyan)" d="M8.500 9L15 6l25 14v3L15 37l-6.500-4L26 23z"/></svg></div>
    <div class="dockitem d-flex flex-column align-items-center"><svg class="face" viewBox="0 0 48 48"><circle cx="24" cy="24" r="22" fill="#e4e4e4"/><circle cx="24" cy="24" r="18" fill="#4a4a4a"/><circle cx="24" cy="24" r="13.500" fill="none" stroke="#ddd" stroke-width="4" stroke-dasharray="2.800 4.270"/><circle cx="24" cy="24" r="11.500" fill="none" stroke="#ddd" stroke-width="2.200"/><circle cx="24" cy="24" r="6" fill="none" stroke="#bbb" stroke-width="2"/><circle cx="24" cy="24" r="3.500" fill="#ccc"/><path d="M24 24H12M24 24l6-10.500M24 24l6 10.500" stroke="#ccc" stroke-width="2.500"/></svg></div>
    <div class="dockitem d-flex flex-column align-items-center"><svg class="face" viewBox="0 0 48 48"><rect x="6" y="2" width="36" height="44" rx="4" fill="#f3f3f3" stroke="#c9c9c9"/><path d="M10 10.500h28M10 14.500h28M10 18.500h28M10 22.500h28M10 26.500h28M10 30.500h28M10 34.500h28" stroke="#cfcfcf"/><path fill="#f0c9a0" d="M10 38l4-9 6 5z"/><path fill="#333" d="M10 38l1.500-3.500 2 2z"/><path fill="#2a5bd7" d="M14 29l18-18 6 5-18 18z"/><path fill="#5d86ea" d="M14 29l18-18 2 1.500L16 31z"/></svg></div>
    <div class="dockitem d-flex flex-column align-items-center"><svg class="face" viewBox="0 0 48 48"><path fill="#0877c0" d="M3 16l4-3 28 21v12L3 17z"/><path fill="#0a8fdb" d="M3 33l4 3 28-21V3L3 32z"/><path fill="#29a3ee" d="M34 3l11 5v33l-11 5z"/></svg></div>
    <div class="dockitem d-flex flex-column align-items-center"><svg class="face" viewBox="0 0 48 48"><rect width="48" height="48" rx="3" fill="#484848"/><path fill="#ff9820" d="M12 17L36 8v9l-14 5.500 14 4V32L12 40v-9l14-5.500-14-4z"/><path fill="#d9760f" d="M22 22.500l14 4-10 0-8-2.500z"/></svg><div class="dots d-flex"><i></i></div></div>
    <div class="dockitem d-flex flex-column align-items-center"><svg class="face" viewBox="0 0 48 48"><rect x="3" y="5" width="40" height="40" rx="8" fill="#ddd" transform="rotate(-4 24 24)"/><rect x="4" y="4" width="40" height="39" rx="7" fill="#f8f8f8"/><path d="M10 16h28M10 20h28M10 24h28M10 28h28M10 32h28" stroke="#e0e0e0"/><text x="24" y="34.500" text-anchor="middle" font-family="DejaVu Serif,serif" font-size="29" font-weight="400" fill="#333" stroke="#333">T</text></svg></div>
    <div class="dockitem d-flex flex-column align-items-center"><svg class="face" viewBox="0 0 48 48"><rect x="4" y="4" width="41" height="40" fill="url(#gTex)" stroke="#3d0f6e"/><path fill="#3f9b32" d="M5 13l9 3-8 8z"/><path fill="#f6f052" d="M10 14l7 2-5 5z"/><path fill="#333" d="M5 4h18l-5 8-9-1z"/><path d="M8 5l11 10M14 4l2 10M22 9l-9 5" stroke="#9a9a9a" stroke-width="1.500"/><g font-family="Liberation Serif,serif" font-size="19" fill="#f0e31e"><text x="13.500" y="37">T</text><text x="22" y="42">E</text><text x="31" y="37">X</text></g></svg><div class="dots d-flex"><i></i></div></div>
    <div class="dockitem d-flex flex-column align-items-center"><svg class="face" viewBox="0 0 48 48"><circle cx="24" cy="24" r="22" fill="#0fb0d2"/><circle cx="24" cy="24" r="13.500" fill="#e7db16"/><g fill="#e7db16"><g id="ray4"><path id="ray" d="M20 13Q24 8 22 2.500q5 4.500 5.500 10.500z"/><use href="#ray" transform="rotate(22.500 24 24)"/><use href="#ray" transform="rotate(45 24 24)"/><use href="#ray" transform="rotate(67.500 24 24)"/></g><use href="#ray4" transform="rotate(90 24 24)"/><use href="#ray4" transform="rotate(180 24 24)"/><use href="#ray4" transform="rotate(270 24 24)"/></g></svg></div>
    <div class="dockitem d-flex flex-column align-items-center"><svg class="face" viewBox="0 0 48 48"><rect x="1.500" y="3.500" width="45" height="38" rx="4" fill="#9a9a98" stroke="#d5d5d5" stroke-width="1.500"/><rect x="6" y="7.500" width="36" height="28" rx="2" fill="#1c0606"/><path fill="url(#gRed)" d="M8 10h15.500v11.500H8zM24.500 10H40v11.500H24.500zM8 22.500h15.500V34H8zM24.500 22.500H40V34H24.500z"/><path d="M8 12l3 1.500L8 15M11 16.500h5M25 12l3 1.500-3 1.500M28 16.500h5M8 26l3 1.500L8 29M11 30.500h5M25 26l3 1.500-3 1.500M28 30.500h5" stroke="#fff" fill="none"/><path fill="#e22" d="M31 37.500h3v2h-3z"/></svg><div class="dots d-flex"><i></i><i></i></div></div>
    <div class="dockitem d-flex flex-column align-items-center"><svg class="face" viewBox="0 0 48 48"><rect x="6" y="2" width="36" height="44" rx="4" fill="#f0f0f0" stroke="#ccc"/><path d="M10 11h18" stroke="#a9a193" stroke-width="2"/><path d="M10 15h28M10 19h13M10 23h13M10 27h9M10 31h28" stroke="#c7c2b5" stroke-width="2"/><path fill="#f14b3d" d="M25 18h13v10H25z"/><path d="M27 26q8-2 7-5-3-2-4 2 1 4 6 2" fill="none" stroke="#fff" stroke-width="1.200"/><path d="M8 34.500h13q1 9-5.500 9-6.500 0-7.500-9zM25 34.500h12q0 9-6 9-5.500 0-6-9zM20 36q3-2 6 0" fill="#d9e2ec" stroke="#2465a8" stroke-width="1.700"/><path d="M10 42l7-6M27 42l7-6" stroke="#555"/></svg><div class="dots d-flex"><i></i></div></div>
    <div class="dockitem d-flex flex-column align-items-center"><svg class="face" viewBox="0 0 48 48"><rect x="2" y="6" width="44" height="36" rx="4" fill="#ef6424"/><path fill="#f27f4d" d="M2 24h44v14q0 4-4 4H6q-4 0-4-4z"/><path d="M17 9q0-8 7-8t7 8" fill="none" stroke="#f3d9b4" stroke-width="2.200"/><path d="M22.500 13L14.500 36M25.500 13l8 23M10 28.500h28" stroke="#fff" stroke-width="4.500"/></svg></div>
    <div class="dockitem d-flex flex-column align-items-center"><svg class="face" viewBox="0 0 48 48"><circle cx="24" cy="24" r="22" fill="#ececec"/><circle cx="24" cy="24" r="18" fill="#5d2a55"/><path fill="#74416c" d="M6.500 28h35A18 18 0 0 1 6.500 28z"/><path d="M22.500 11l-8 24" stroke="#fff" stroke-width="4.500"/><path d="M24.500 11l8 24" stroke="#dcc2dd" stroke-width="5"/><path d="M10 27h28" stroke="#f5f5f5" stroke-width="3.500"/><circle cx="29" cy="27" r="2" fill="#fff" stroke="#555"/></svg></div>
    <div class="dockitem d-flex flex-column align-items-center"><svg class="face" viewBox="0 0 48 48"><rect x="3" y="3" width="42" height="42" rx="2" fill="url(#gP)"/><path d="M15.500 34V22M15.500 14.500h12.500q5 0 5 4.500t-5 4.500H15.500" fill="none" stroke="#fff" stroke-width="3" stroke-linecap="round"/></svg></div>
    <div class="dockitem d-flex flex-column align-items-center"><svg class="face" viewBox="0 0 48 48"><rect x="3" y="3" width="42" height="42" rx="2" fill="url(#gW)"/><path d="M14.500 15v19L24 24l9.500 10V15" fill="none" stroke="#fff" stroke-width="3" stroke-linecap="round"/></svg></div>
    <div class="dockitem d-flex flex-column align-items-center"><svg class="face" viewBox="0 0 48 48"><rect x="2" y="6" width="44" height="36" rx="4" fill="#e4e2d8" stroke="#c9c5b8"/><path fill="#c9c5b5" d="M33 6h9q4 0 4 4v6L26 36H10z"/><path fill="#aaa28e" d="M2 34h44v4q0 4-4 4H6q-4 0-4-4z"/><circle cx="35" cy="16" r="5" fill="#fff"/><circle cx="21" cy="21" r="11" fill="#f0f0ea" stroke="#5f5f5f" stroke-width="2"/><path d="M29.500 29.500l8 8" stroke="#3c3c3c" stroke-width="3.500"/></svg><div class="dots d-flex"><i></i></div></div>
    <div class="dockitem d-flex flex-column align-items-center"><svg class="face" viewBox="0 0 48 48"><rect width="48" height="48" rx="7" fill="url(#gMeet)"/><path fill="#dbe8ff" d="M8 27l9-11q1.500-1.500 3 0l5 6-9 9q-2 1-3 0l-4-3q-1-.5-1-1z"/><path fill="#fff" d="M20 26l9-10q1.500-1.500 3 0l8 10q1 1-1 2l-3 3q-2 1-3 0l-4-4-4 4q-2 1-3 0l-3-3z"/></svg><div class="dots d-flex"><i></i></div></div>
    <div class="dockitem d-flex flex-column align-items-center"><svg class="face" viewBox="0 0 48 48"><rect x="6" y="2" width="36" height="44" rx="4" fill="url(#gUsb)" stroke="#d2d2d2"/><path d="M24 14v23M24 32q-7-2-7-9M24 29q7-2 7-8" fill="none" stroke="#858585" stroke-width="3"/><path fill="#858585" d="M24 9l4.500 8h-9zM28 17.500h6v6h-6z"/><circle cx="17" cy="22.500" r="2.800" fill="#858585"/><path fill="#858585" d="M21 33h6v6h-6z"/></svg></div>
    <svg class="grid9 ms-auto" viewBox="0 0 30 30" fill="#f2f2f2"><rect width="6" height="6" rx="1.500"/><rect x="12" width="6" height="6" rx="1.500"/><rect x="24" width="6" height="6" rx="1.500"/><rect y="12" width="6" height="6" rx="1.500"/><rect x="12" y="12" width="6" height="6" rx="1.500"/><rect x="24" y="12" width="6" height="6" rx="1.500"/><rect y="24" width="6" height="6" rx="1.500"/><rect x="12" y="24" width="6" height="6" rx="1.500"/><rect x="24" y="24" width="6" height="6" rx="1.500"/></svg>
  </footer>
</div>
</body>
</html>
